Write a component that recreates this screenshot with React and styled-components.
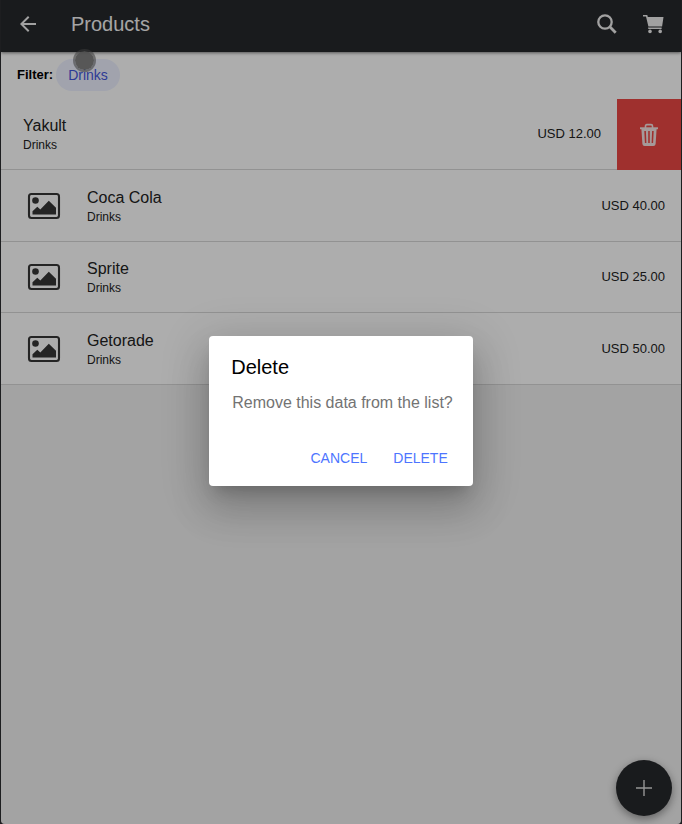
import React from 'react';
import styled, { createGlobalStyle } from 'styled-components';

const Global = createGlobalStyle`
  * { box-sizing: border-box; }
  html, body, #root { height: 100%; }
  body {
    margin: 0;
    background: #1d1e20;
    font-family: "Liberation Sans", Arial, sans-serif;
    color: #222;
  }
  button { font: inherit; color: inherit; border: 0; background: none; padding: 0; cursor: pointer; }
  h1, h2, h3, p, ul { margin: 0; padding: 0; font-weight: 400; }
`;

const Screen = styled.div`
  position: relative;
  display: flex;
  flex-direction: column;
  min-height: 100%;
  margin: 0 1px;
  background: #f0f0f0;
  border-radius: 0 0 4px 4px;
  overflow: hidden;
`;

const Toolbar = styled.header`
  display: flex;
  align-items: center;
  height: 52px;
  padding: 0 16px 4px 15px;
  background: #26282b;
  color: #fff;
  box-shadow: 0 1px 3px rgba(0, 0, 0, 0.5);
  z-index: 1;
`;

const Title = styled.h1`
  flex: 1;
  margin-left: 31px;
  font-size: 20px;
  line-height: 24px;
  color: #f4f4f4;
`;

const IconButton = styled.button`
  display: flex;
  color: #eee;
  & + & { margin-left: 26px; }
`;

const Icon = styled.svg`
  display: block;
  width: ${(p) => p.$w}px;
  height: ${(p) => p.$h}px;
  fill: currentColor;
`;

const FilterBar = styled.div`
  position: relative;
  display: flex;
  align-items: center;
  gap: 3px;
  height: 47px;
  padding: 0 0 2px 16px;
  background: #fff;
  font-size: 13px;
`;

const FilterLabel = styled.strong`
  color: #000;
  line-height: 16px;
`;

const Chip = styled.button`
  height: 32px;
  padding: 0 12px;
  border-radius: 16px;
  background: #edf1ff;
  color: #4556dc;
  font-size: 14px;
`;

const TouchPoint = styled.span`
  position: absolute;
  left: 72px;
  top: -3px;
  width: 23px;
  height: 23px;
  border: 2px solid rgba(90, 90, 90, 0.55);
  border-radius: 50%;
  background: rgba(115, 115, 115, 0.9);
  background-clip: padding-box;
  z-index: 2;
`;

const List = styled.ul`
  list-style: none;
  background: #fff;
`;

const Row = styled.li`
  display: flex;
  align-items: stretch;
  min-height: 71px;
  &:nth-child(even) { min-height: 72px; }
`;

const Item = styled.div`
  display: flex;
  flex: 1;
  align-items: center;
  min-width: 0;
  padding: 0 16px 0 ${(p) => (p.$slid ? 22 : 26)}px;
  border-bottom: 1px solid #d8d8d8;
`;

const Thumb = styled.span`
  width: 60px;
  color: #353535;
`;

const ItemText = styled.div`
  flex: 1;
  padding: 16px 0 15px;
`;

const Name = styled.h3`
  font-size: 16px;
  line-height: 22px;
`;

const Category = styled.p`
  font-size: 12px;
  line-height: 17px;
`;

const Price = styled.span`
  font-size: 13px;
  line-height: 20px;
`;

const RemoveButton = styled.button`
  display: flex;
  align-items: center;
  justify-content: center;
  width: 64px;
  background: #eb4744;
  color: #f4e4e4;
`;

const AddButton = styled.button`
  position: absolute;
  right: 9px;
  bottom: 8px;
  display: flex;
  align-items: center;
  justify-content: center;
  width: 56px;
  height: 56px;
  border-radius: 50%;
  background: #26282b;
  color: #ddd;
  box-shadow: 0 3px 8px rgba(0, 0, 0, 0.4);
`;

const Backdrop = styled.div`
  position: absolute;
  inset: 0;
  display: flex;
  align-items: center;
  justify-content: center;
  background: rgba(0, 0, 0, 0.32);
  z-index: 3;
`;

const Dialog = styled.section`
  padding: 20px 20px 10px 22px;
  margin-top: -2px;
  border-radius: 4px;
  background: #fff;
  box-shadow: 0 11px 15px -7px rgba(0, 0, 0, 0.2), 0 24px 38px 3px rgba(0, 0, 0, 0.14),
    0 9px 46px 8px rgba(0, 0, 0, 0.12);
`;

const DialogTitle = styled.h2`
  font-size: 20px;
  line-height: 23px;
  color: #000;
`;

const DialogMessage = styled.p`
  padding: 15px 0 28px 1px;
  font-size: 16px;
  line-height: 18px;
  color: #737373;
`;

const DialogActions = styled.div`
  display: flex;
  justify-content: flex-end;
  gap: 26px;
  padding-right: 5px;
`;

const DialogButton = styled.button`
  height: 36px;
  font-size: 14px;
  color: #4d75ff;
  text-transform: uppercase;
`;

const BackIcon = () => (
  <Icon $w={24} $h={24} viewBox="0 0 24 24" aria-hidden="true">
    <path d="M20 11H7.8l5.6-5.6L12 4l-8 8 8 8 1.4-1.4L7.8 13H20z" />
  </Icon>
);

const SearchIcon = () => (
  <Icon $w={20} $h={20} viewBox="0 0 20 20" aria-hidden="true">
    <circle cx="8" cy="8" r="6.7" fill="none" stroke="currentColor" strokeWidth="2.3" />
    <path d="M12.8 12.8l5.9 5.9" stroke="currentColor" strokeWidth="2.8" />
  </Icon>
);

const CartIcon = () => (
  <Icon $w={22} $h={22} viewBox="0 0 22 22" aria-hidden="true">
    <path d="M0 2h4.300l.5 2H20.500l-1.400 9.400H5.400L3 3.400H0z" />
    <path d="M5 14.600h13.600V16H5.300z" />
    <circle cx="7" cy="18.4" r="1.8" />
    <circle cx="17.200" cy="18.4" r="1.8" />
  </Icon>
);

const PictureIcon = () => (
  <Icon $w={34} $h={28} viewBox="0 0 34 28" aria-hidden="true">
    <rect x="2" y="2" width="30" height="24" rx="2.5" fill="none" stroke="currentColor" strokeWidth="2.1" />
    <circle cx="8.5" cy="8.5" r="3.3" />
    <path d="M5.500 22.500v-3.200l4.800-4.600 3 2.700 8.500-8.600 7.200 7v6.700z" />
  </Icon>
);

const TrashIcon = () => (
  <Icon $w={20} $h={24} viewBox="0 0 20 24" aria-hidden="true">
    <path d="M1 4.300h18v1.900H1z" />
    <path d="M6.500 5V3q0-1.400 1.400-1.400h4.200q1.400 0 1.400 1.400v2" fill="none" stroke="currentColor" strokeWidth="1.6" />
    <path
      fillRule="evenodd"
      d="M2.400 6h15.200l-1 15q-.2 2-2.200 2H5.600q-2 0-2.200-2zM5.300 8l.6 12h1.500l-.5-12zM9.200 8v12h1.600V8zM13.100 8l-.5 12h1.500l.6-12z"
    />
  </Icon>
);

const PlusIcon = () => (
  <Icon $w={16} $h={16} viewBox="0 0 16 16" aria-hidden="true">
    <path d="M7.300 0h1.400v7.300H16v1.400H8.700V16H7.300V8.700H0V7.300h7.300z" />
  </Icon>
);

const products = [
  { name: 'Yakult', category: 'Drinks', price: 'USD 12.00', slid: true },
  { name: 'Coca Cola', category: 'Drinks', price: 'USD 40.00' },
  { name: 'Sprite', category: 'Drinks', price: 'USD 25.00' },
  { name: 'Getorade', category: 'Drinks', price: 'USD 50.00' },
];

function ProductRow({ product }) {
  return (
    <Row>
      <Item $slid={product.slid}>
        {!product.slid && (
          <Thumb>
            <PictureIcon />
          </Thumb>
        )}
        <ItemText>
          <Name>{product.name}</Name>
          <Category>{product.category}</Category>
        </ItemText>
        <Price>{product.price}</Price>
      </Item>
      {product.slid && (
        <RemoveButton aria-label={`Delete ${product.name}`}>
          <TrashIcon />
        </RemoveButton>
      )}
    </Row>
  );
}

export default function App() {
  return (
    <>
      <Global />
      <Screen>
        <Toolbar>
          <IconButton aria-label="Back">
            <BackIcon />
          </IconButton>
          <Title>Products</Title>
          <IconButton aria-label="Search">
            <SearchIcon />
          </IconButton>
          <IconButton aria-label="Cart">
            <CartIcon />
          </IconButton>
        </Toolbar>
        <FilterBar>
          <FilterLabel>Filter:</FilterLabel>
          <Chip>Drinks</Chip>
          <TouchPoint />
        </FilterBar>
        <List>
          {products.map((product) => (
            <ProductRow key={product.name} product={product} />
          ))}
        </List>
        <AddButton aria-label="Add product">
          <PlusIcon />
        </AddButton>
        <Backdrop>
          <Dialog role="alertdialog" aria-modal="true" aria-labelledby="dialog-title" aria-describedby="dialog-message">
            <DialogTitle id="dialog-title">Delete</DialogTitle>
            <DialogMessage id="dialog-message">Remove this data from the list?</DialogMessage>
            <DialogActions>
              <DialogButton>Cancel</DialogButton>
              <DialogButton>Delete</DialogButton>
            </DialogActions>
          </Dialog>
        </Backdrop>
      </Screen>
    </>
  );
}
